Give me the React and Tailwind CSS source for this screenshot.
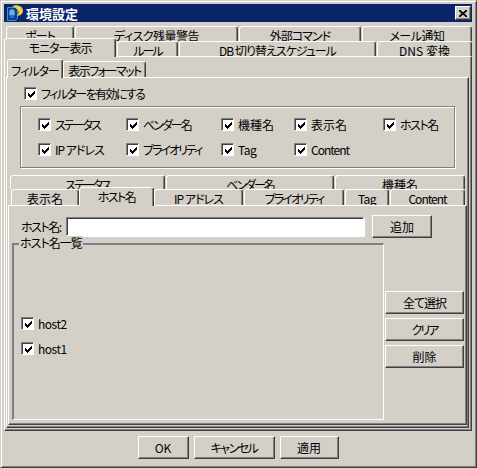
import clsx from 'clsx'

const panel = 'bg-[#d4d0c8] border border-t-white border-l-white border-r-[#404040] border-b-[#404040] shadow-[inset_-1px_-1px_0_#808080]'

// the old bitmap font has narrow kana and latin, so tracking is set per label
const kanji = 'tracking-normal'
const half = 'tracking-[-0.5px]'
const tight = 'tracking-[-1.5px]'
const kana = 'tracking-[-2px]'

function Tab({ active, className, children }) {
  return (
    <div
      className={clsx(
        'flex justify-center shrink-0 overflow-hidden bg-[#d4d0c8] rounded-t-[3px] pt-[2px] leading-[14px] whitespace-nowrap',
        'border-t border-l border-r border-t-white border-l-white border-r-[#404040] shadow-[inset_-1px_0_0_#808080]',
        active && 'relative z-10 -mb-px',
        className
      )}
    >
      {children}
    </div>
  )
}

function Btn({ className, children }) {
  return (
    <button className={clsx(panel, 'flex items-center justify-center shrink-0 h-[23px] leading-none', className)}>
      {children}
    </button>
  )
}

const checkCols = [2, 3, 4, 3, 2, 1, 0]

function Check() {
  return (
    <span className="flex items-center justify-center shrink-0 w-[13px] h-[13px] bg-white border border-t-[#808080] border-l-[#808080] border-r-white border-b-white shadow-[inset_1px_1px_0_#404040]">
      <svg width="7" height="7" viewBox="0 0 7 7" shapeRendering="crispEdges" className="ml-px mt-px">
        {checkCols.map((y, x) => (
          <rect key={x} x={x} y={y} width="1" height="3" fill="#000" />
        ))}
      </svg>
    </span>
  )
}

function CheckLabel({ className, children }) {
  return (
    <label className="flex items-center gap-[4px] h-[13px] leading-none whitespace-nowrap">
      <Check />
      <span className={className}>{children}</span>
    </label>
  )
}

function AppIcon() {
  return (
    <svg width="17" height="16" viewBox="0 0 17 16" className="shrink-0">
      <path d="M1.500 2.500h8l2 2v9l-2 2h-8z" fill="#123c8c" stroke="#4a8ad8" />
      <ellipse cx="6" cy="8" rx="2.800" ry="3.800" fill="#6ab0e8" />
      <rect x="4" y="10" width="4" height="3" fill="#2a70c0" />
      <path d="M6 1c6-2 11 1 11 4.500s-3 5-6 5.500c1.500-2 2-3.500 1-5.500S9 2.500 6 1z" fill="#f0d040" />
    </svg>
  )
}

const filters = [
  ['ステータス', kana],
  ['ベンダー名', kana],
  ['機種名', kanji],
  ['表示名', kanji],
  ['ホスト名', tight],
  ['IP アドレス'],
  ['プライオリティ', kana],
  ['Tag', half],
  ['Content', 'tracking-[-1px]'],
]

export default function App() {
  return (
    <div className="w-[477px] h-[468px] bg-[#d4d0c8] text-[12px] tracking-[-1px] text-black font-['Noto_Sans_CJK_JP',sans-serif] [font-feature-settings:'palt'] flex flex-col overflow-hidden pt-[3px] pl-[3px] pr-[4px] border border-t-[#d4d0c8] border-l-[#d4d0c8] border-r-[#404040] border-b-[#404040] shadow-[inset_1px_1px_0_#fff,inset_-1px_-1px_0_#808080]">
      <div className="h-[18px] shrink-0 bg-[#0a246a] flex items-center pl-[2px] pr-[1px]">
        <AppIcon />
        <span className="ml-[3px] text-white font-bold text-[13px] leading-none tracking-normal">環境設定</span>
        <button className={clsx(panel, 'ml-auto flex items-center justify-center w-[16px] h-[14px]')}>
          <svg width="8" height="7" viewBox="0 0 8 7">
            <path d="M0 0l8 7M8 0L0 7" stroke="#000" strokeWidth="1.700" />
          </svg>
        </button>
      </div>

      <div className="flex gap-px h-[15px] mt-[4px] ml-[2px] overflow-hidden items-start">
        <Tab className="w-[68px] h-[18px]">ポート</Tab>
        <Tab className="w-[163px] h-[18px] tracking-[-0.5px]">ディスク残量警告</Tab>
        <Tab className="w-[122px] h-[18px]">外部コマンド</Tab>
        <Tab className="w-[110px] h-[18px] tracking-[-0.5px]">メール通知</Tab>
      </div>
      <div className="flex gap-px items-end h-[18px] -mt-[3px] relative z-10">
        <Tab active className="w-[112px] h-[19px]">モニター表示</Tab>
        <Tab className="w-[61px] h-[15px] tracking-[-2px]">ルール</Tab>
        <Tab className="w-[197px] h-[15px]">DB 切り替えスケジュール</Tab>
        <Tab className="w-[95px] h-[15px] tracking-normal">DNS 変換</Tab>
      </div>

      <div className={clsx(panel, 'w-[468px] h-[375px] shrink-0 flex flex-col pt-[2px] pl-px pr-[2px] pb-[2px]')}>
        <div className="flex items-end h-[18px] ml-px relative z-10 shrink-0">
          <Tab active className="w-[56px] h-[19px]"><span className="mt-[2px]">フィルター</span></Tab>
          <Tab className="w-[83px] h-[16px] tracking-[-1.5px]">表示フォーマット</Tab>
        </div>

        <div className={clsx(panel, 'flex-1 flex flex-col pl-px pr-px pb-[2px]')}>
          <div className="ml-[16px] mt-[9px]">
            <CheckLabel className="tracking-[-1.6px]">フィルターを有効にする</CheckLabel>
          </div>

          <div className="ml-[12px] mt-[6px] w-[435px] h-[62px] shrink-0 border border-[#808080] shadow-[1px_1px_0_#fff,inset_1px_1px_0_#fff] pl-[17px] pt-[11px] grid grid-cols-[88px_95px_73px_89px_auto] gap-y-[12px] content-start">
            {filters.map(([label, cls]) => (
              <CheckLabel key={label} className={cls}>{label}</CheckLabel>
            ))}
          </div>

          <div className="flex h-[14px] mt-[7px] ml-[2px] overflow-hidden items-start shrink-0">
            <Tab className="w-[155px] h-[18px] tracking-[-2px]">ステータス</Tab>
            <Tab className="w-[168px] h-[18px] ml-px tracking-[-2px]">ベンダー名</Tab>
            <Tab className="w-[130px] h-[18px] ml-px tracking-normal">機種名</Tab>
          </div>
          <div className="flex items-end h-[18px] -mt-[2px] ml-[3px] relative z-10 shrink-0">
            <Tab className="w-[68px] h-[16px] tracking-normal">表示名</Tab>
            <Tab active className="w-[75px] h-[19px] tracking-[-1.5px]">ホスト名</Tab>
            <Tab className="w-[89px] h-[16px]">IP アドレス</Tab>
            <Tab className="w-[100px] h-[16px] ml-px tracking-[-2px]">プライオリティ</Tab>
            <Tab className="w-[44px] h-[16px] ml-px tracking-[-0.5px]">Tag</Tab>
            <Tab className="w-[75px] h-[16px] ml-px">Content</Tab>
          </div>

          <div className={clsx(panel, 'flex-1 flex flex-col pl-[3px] pt-[9px]')}>
            <div className="flex items-center h-[23px] shrink-0">
              <span className="ml-[9px] w-[45px] leading-none whitespace-nowrap tracking-[-1.5px]">ホスト名:</span>
              <input
                readOnly
                className="w-[298px] h-[19px] bg-white border border-t-[#808080] border-l-[#808080] border-r-white border-b-white shadow-[inset_1px_1px_0_#404040,1px_1px_0_#fff]"
              />
              <Btn className="w-[60px] ml-[8px] tracking-normal">追加</Btn>
            </div>

            <div className="flex mt-[5px]">
              <div className="relative w-[372px] h-[177px] shrink-0 border-t-2 border-l-2 border-r border-b border-t-[#808080] border-l-[#808080] border-r-white border-b-white pl-[7px] pt-[72px] flex flex-col gap-[12px]">
                <span className="absolute left-[5px] -top-[9px] px-px bg-[#d4d0c8] leading-[14px] whitespace-nowrap">ホスト名一覧</span>
                <CheckLabel className={half}>host2</CheckLabel>
                <CheckLabel className={half}>host1</CheckLabel>
              </div>
              <div className="flex flex-col gap-[4px] ml-px pt-[48px]">
                <Btn className="w-[79px]">全て選択</Btn>
                <Btn className="w-[79px] tracking-[-2px]">クリア</Btn>
                <Btn className="w-[79px] tracking-normal">削除</Btn>
              </div>
            </div>
          </div>
        </div>
      </div>

      <div className="flex justify-center gap-[5px] mt-[5px]">
        <Btn className="w-[51px] tracking-normal">OK</Btn>
        <Btn className="w-[81px] tracking-[-1.5px]">キャンセル</Btn>
        <Btn className="w-[59px] tracking-normal">適用</Btn>
      </div>
    </div>
  )
}
